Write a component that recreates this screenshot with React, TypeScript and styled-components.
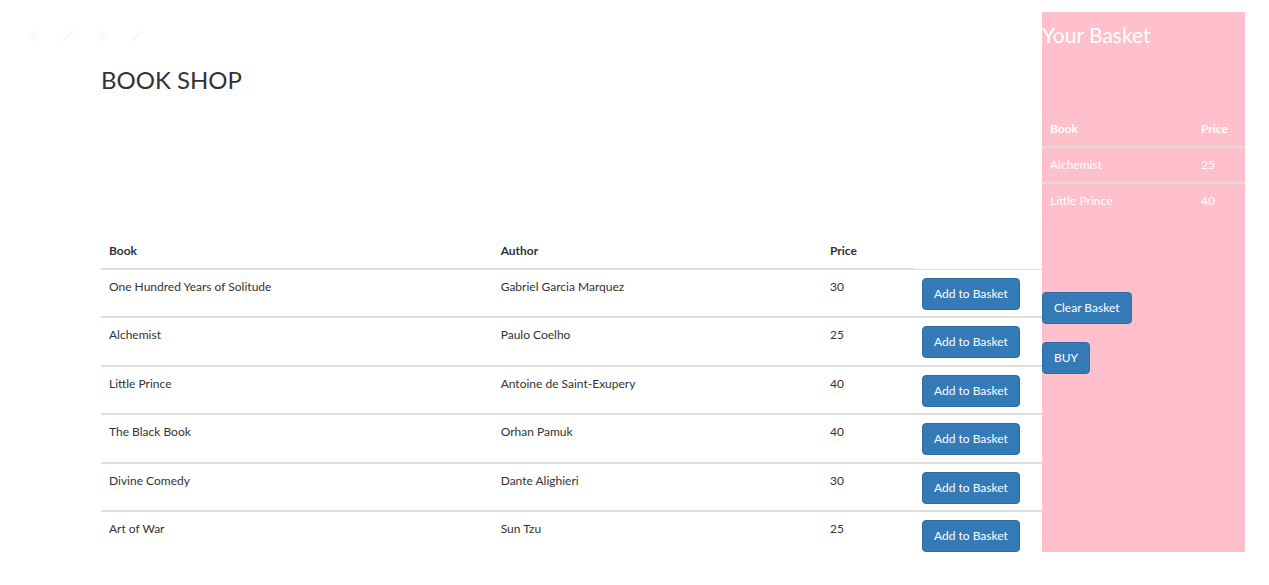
import React, { useState } from "react";
import styled, { createGlobalStyle, css } from "styled-components";

const GlobalStyle = createGlobalStyle`
  *, *::before, *::after { box-sizing: border-box; }
  body {
    margin: 0;
    background: #fff;
    color: #333;
    font-family: Lato, "Open Sans", sans-serif;
    font-size: 12px;
    line-height: 18px;
  }
`;

const Page = styled.div`
  display: grid;
  grid-template-columns: minmax(0, 1fr) 203px;
  padding: 12px 24px 33px 28px;
`;

const Shop = styled.main`
  min-width: 0;
`;

const Doodles = styled.div`
  display: flex;
  gap: 23px;
  height: 48px;
  padding-top: 17px;
`;

const Doodle = styled.svg<{ $wide?: boolean }>`
  width: ${(p) => (p.$wide ? 13 : 10)}px;
  height: 14px;
  fill: none;
  stroke: #f5f5f5;
`;

const Catalogue = styled.section`
  padding-left: 73px;
`;

const Title = styled.h1`
  margin: 0 0 134px;
  font-size: 24px;
  font-weight: 400;
  line-height: 40px;
`;

const Table = styled.table`
  width: 100%;
  table-layout: fixed;
  border-collapse: collapse;
`;

const cell = css`
  padding: 8px;
  text-align: left;
  vertical-align: top;
`;

const HeadCell = styled.th<{ $width?: string }>`
  ${cell}
  width: ${(p) => p.$width ?? "auto"};
  border-bottom: 2px solid #ddd;
  font-weight: 700;
`;

const EmptyHeadCell = styled.td`
  width: 128px;
  border-bottom: 1px solid #ddd;
`;

const Cell = styled.td`
  ${cell}
`;

const BookRow = styled.tr`
  height: 48px;
  border-bottom: 2px solid #ddd;
  &:nth-child(even) { height: 49px; }
  &:last-child { height: 40px; border-bottom: 0; }
  ${Cell} { padding-bottom: 0; }
`;

const BasketRow = styled.tr`
  height: 36px;
  & + & { border-top: 2px solid #ddd; }
`;

const Button = styled.button`
  height: 32px;
  padding: 0 11px;
  border: 1px solid #2e6da4;
  border-radius: 4px;
  background: #337ab7;
  color: #fff;
  font: inherit;
  white-space: nowrap;
  cursor: pointer;
`;

const Basket = styled.aside`
  background: #ffc0cb;
  color: #fff;
`;

const BasketTitle = styled.h2`
  margin: 0 0 61px;
  padding-top: 7px;
  font-size: 21px;
  font-weight: 400;
  line-height: 32px;
`;

const BasketItems = styled.div`
  min-height: 180px;
`;

const Actions = styled.div`
  display: flex;
  flex-direction: column;
  align-items: flex-start;
  gap: 18px;
`;

type Book = { title: string; author: string; price: number };

const books: Book[] = [
  { title: "One Hundred Years of Solitude", author: "Gabriel Garcia Marquez", price: 30 },
  { title: "Alchemist", author: "Paulo Coelho", price: 25 },
  { title: "Little Prince", author: "Antoine de Saint-Exupery", price: 40 },
  { title: "The Black Book", author: "Orhan Pamuk", price: 40 },
  { title: "Divine Comedy", author: "Dante Alighieri", price: 30 },
  { title: "Art of War", author: "Sun Tzu", price: 25 },
];

const Flower = () => (
  <Doodle viewBox="0 0 10 14" aria-hidden="true">
    <path d="M5 2 8 4 9 7 7 11 4 12 1 9 1 5 3 3ZM5 5v4M3 7h4M4 4l3 6" strokeDasharray="2 1" />
  </Doodle>
);

const Pen = () => (
  <Doodle $wide viewBox="0 0 13 14" aria-hidden="true">
    <path d="M1 13 3 9 10 3 12 0 11 5 5 10ZM3 11 10 4" strokeDasharray="3 1" />
  </Doodle>
);

export default function App() {
  const [basket, setBasket] = useState<Book[]>([books[1], books[2]]);

  return (
    <>
      <GlobalStyle />
      <Page>
        <Shop>
          <Doodles>
            <Flower />
            <Pen />
            <Flower />
            <Pen />
          </Doodles>
          <Catalogue>
            <Title>BOOK SHOP</Title>
            <Table>
              <thead>
                <tr>
                  <HeadCell scope="col">Book</HeadCell>
                  <HeadCell scope="col" $width="35%">Author</HeadCell>
                  <HeadCell scope="col" $width="92px">Price</HeadCell>
                  <EmptyHeadCell />
                </tr>
              </thead>
              <tbody>
                {books.map((book) => (
                  <BookRow key={book.title}>
                    <Cell>{book.title}</Cell>
                    <Cell>{book.author}</Cell>
                    <Cell>{book.price}</Cell>
                    <Cell>
                      <Button type="button" onClick={() => setBasket([...basket, book])}>
                        Add to Basket
                      </Button>
                    </Cell>
                  </BookRow>
                ))}
              </tbody>
            </Table>
          </Catalogue>
        </Shop>
        <Basket>
          <BasketTitle>Your Basket</BasketTitle>
          <BasketItems>
            <Table>
              <thead>
                <tr>
                  <HeadCell scope="col">Book</HeadCell>
                  <HeadCell scope="col" $width="52px">Price</HeadCell>
                </tr>
              </thead>
              <tbody>
                {basket.map((book, i) => (
                  <BasketRow key={i}>
                    <Cell>{book.title}</Cell>
                    <Cell>{book.price}</Cell>
                  </BasketRow>
                ))}
              </tbody>
            </Table>
          </BasketItems>
          <Actions>
            <Button type="button" onClick={() => setBasket([])}>Clear Basket</Button>
            <Button type="button">BUY</Button>
          </Actions>
        </Basket>
      </Page>
    </>
  );
}
